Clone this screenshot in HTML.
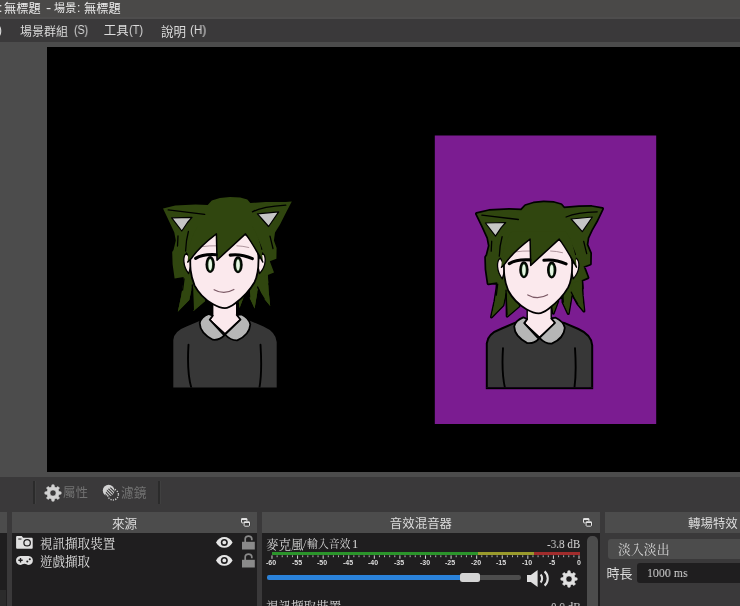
<!DOCTYPE html><html lang="zh-Hant"><head><meta charset="utf-8"><title>OBS</title><style>
html,body{margin:0;padding:0;background:#3a393a;}
body{width:740px;height:606px;overflow:hidden;position:relative;font-family:"Liberation Sans",sans-serif;color:#dcdcdc;font-size:12px;}
.abs,.g,.t{position:absolute;}
.g{overflow:visible;display:block;filter:blur(0.3px);}
.t{white-space:nowrap;line-height:1;will-change:transform;filter:blur(0.3px);}
.serif{font-family:"Liberation Serif",serif;}
.cx{transform:scaleX(0.84);transform-origin:0 0;}
.gs{font-family:"Liberation Sans","Noto Sans CJK TC",sans-serif;font-size:1000px;}
.gm{font-family:"Liberation Serif","Noto Serif CJK SC",serif;font-size:1000px;}
#titlebar{left:0;top:0;width:740px;height:19px;background:#4a4948;box-shadow:inset 0 -2px 0 #4e4d4d;}
#menubar{left:0;top:19px;width:740px;height:22.7px;background:#3a393a;}
#previewwrap{left:0;top:41.7px;width:740px;height:435.3px;background:#4c4c4c;}
#preview{left:47px;top:47px;width:693px;height:425px;background:#000;overflow:hidden;}
#toolbar{left:0;top:477px;width:740px;height:35px;background:#3a393a;}
.docktitle{top:512px;height:21px;background:#4c4c4c;}
.dockbody{top:533px;height:73px;background:#1f1e1f;}
</style></head><body>
<div id="titlebar" class="abs"></div>
<div id="menubar" class="abs"></div>
<div id="previewwrap" class="abs"></div>
<div id="preview" class="abs">
<svg class="g" viewBox="47 47 693 425" style="left:0;top:0;width:693px;height:425px;filter:blur(0.65px)" role="img" aria-label="avatar preview">
<defs>
<g id="head" stroke-linejoin="round" stroke-linecap="round">
<polygon points="184.5,275.0 181.2,296.0 177.8,311.8 189.3,300.0 191.8,288.0 192.0,280.0" fill="#30460f" stroke="#000" stroke-width="3" paint-order="stroke"/><polygon points="193.2,284.0 193.5,311.0 205.2,301.0 202.0,286.0" fill="#30460f" stroke="#000" stroke-width="3" paint-order="stroke"/><polygon points="267.8,275.0 268.6,290.5 270.2,305.9 264.0,298.4 257.4,286.0 258.0,278.0" fill="#30460f" stroke="#000" stroke-width="3" paint-order="stroke"/><polygon points="258.4,286.0 254.6,308.4 249.3,297.0 249.0,286.0" fill="#30460f" stroke="#000" stroke-width="3" paint-order="stroke"/><polygon points="244.0,296.0 239.6,308.0 238.2,297.0" fill="#30460f" stroke="#000" stroke-width="3" paint-order="stroke"/>
<polygon points="163.0,208.5 175.3,205.6 195.5,204.6 207.7,205.0 211.8,200.6 219.9,198.1 230.0,197.0 240.2,197.6 247.3,199.6 250.3,203.1 265.5,202.1 285.8,202.1 291.8,201.4 286.2,212.3 280.0,224.4 275.0,232.5 273.9,240.6 276.6,248.0 276.4,258.8 269.8,261.2 274.0,272.4 267.8,275.1 268.4,283.0 255.0,292.0 200.0,292.0 184.0,284.0 183.5,277.0 174.6,278.4 172.6,264.3 172.2,252.0 173.5,250.0 175.8,240.6 174.3,232.5 169.2,221.4" fill="#30460f" stroke="#000" stroke-width="3.400" paint-order="stroke"/>
<polygon points="184.5,275.0 181.2,296.0 177.8,311.8 189.3,300.0 191.8,288.0 192.0,280.0" fill="#30460f"/><polygon points="193.2,284.0 193.5,311.0 205.2,301.0 202.0,286.0" fill="#30460f"/><polygon points="267.8,275.0 268.6,290.5 270.2,305.9 264.0,298.4 257.4,286.0 258.0,278.0" fill="#30460f"/><polygon points="258.4,286.0 254.6,308.4 249.3,297.0 249.0,286.0" fill="#30460f"/><polygon points="244.0,296.0 239.6,308.0 238.2,297.0" fill="#30460f"/>
<polygon points="171.7,217.8 192,217.3 187.5,222.5 181.8,231" fill="#c6c6c6" stroke="#000" stroke-width="1.2"/>
<polygon points="257.4,213.8 278.7,211.8 268.6,226.5 262,219" fill="#c6c6c6" stroke="#000" stroke-width="1.2"/>
<path d="M168.2 209.9L204.7 214.3M252.4 211.8Q263 206.500 285.800 205.200M188.400 231.500Q186 240 185.600 251M254.300 234.400Q258.500 240 261.700 249.300M270 236.100L273 248.500M178 236L177.500 246M192.300 285L193.300 309.500M257.600 287Q260 293 264 298.600M249.200 290L249.600 297M184 279L182.600 290" stroke="#000" stroke-width="1.300" fill="none"/>
<path d="M186.500 253C182.500 256 182.800 266 188.600 273.600L192 262Z" fill="#fbe9ed" stroke="#000" stroke-width="1.300"/>
<path d="M262.500 253C266.500 256 266.500 266 259.500 273.600L257 262Z" fill="#fbe9ed" stroke="#000" stroke-width="1.300"/>
<path d="M190.400 256C190 266 190 274 194.500 285.300C198 292 205 299.500 212.700 304C218 307 222 308.100 224.900 308.100C228 308.100 231 306.500 235 303.500C241 299 250 290 254.500 282.200C258 275 258.800 266 258.400 256C257 238 242 229 224.400 229C207 229 192 238 190.400 256Z" fill="#fbe9ed" stroke="#000" stroke-width="1.800"/>
<path d="M202.300 246.600Q209 245.600 216.400 245.800M236.900 245.800Q243 246 248.800 247.500" stroke="#9a7f88" stroke-width="0.800" fill="none"/>
<path d="M187.500 263C188.500 250 190 238 198 226H252C259 236 262 248 263 263L260.700 258.200C256 250 251 241 245.500 233.900L217 260.200L216.400 233.900C207 241 198 249 191.500 258.200Z" fill="#30460f"/>
<path d="M187.800 262L191.500 258.200C198 249 207 241 216.400 233.900L217 260.200L245.500 233.900C251 241 256 250 260.700 258.200L262.800 262" fill="none" stroke="#000" stroke-width="1.500"/>
<path d="M195.600 258.400Q203 253.800 216.200 254.700M230.200 255.100Q241 253.600 252.400 258.700" stroke="#000" stroke-width="3.100" fill="none"/>
<ellipse cx="210.200" cy="264.600" rx="4.700" ry="8.500" fill="#020502"/>
<ellipse cx="238" cy="264.800" rx="4.700" ry="8.500" fill="#020502"/>
<ellipse cx="210.200" cy="264.800" rx="2.700" ry="6.600" fill="#163214"/>
<ellipse cx="238" cy="265" rx="2.700" ry="6.600" fill="#163214"/>
<ellipse cx="210.200" cy="264.800" rx="1.850" ry="5.700" fill="#e6f7e4"/>
<ellipse cx="238" cy="265" rx="1.850" ry="5.700" fill="#e6f7e4"/>
<path d="M214.100 289.700Q224 295.200 233.900 289.500" stroke="#7c5a66" stroke-width="1.200" fill="none"/>
</g>
<g id="head2" stroke-linejoin="round" stroke-linecap="round">
<polygon points="184.5,275.0 181.2,296.0 177.8,311.8 189.3,300.0 191.8,288.0 192.0,280.0" fill="#30460f" stroke="#000" stroke-width="3" paint-order="stroke"/><polygon points="193.2,284.0 193.5,311.0 205.2,301.0 202.0,286.0" fill="#30460f" stroke="#000" stroke-width="3" paint-order="stroke"/><polygon points="267.8,275.0 268.6,290.5 270.2,305.9 264.0,298.4 257.4,286.0 258.0,278.0" fill="#30460f" stroke="#000" stroke-width="3" paint-order="stroke"/><polygon points="258.4,286.0 254.6,308.4 249.3,297.0 249.0,286.0" fill="#30460f" stroke="#000" stroke-width="3" paint-order="stroke"/><polygon points="244.0,296.0 239.6,308.0 238.2,297.0" fill="#30460f" stroke="#000" stroke-width="3" paint-order="stroke"/>
<polygon points="163.0,208.5 175.3,205.6 195.5,204.6 207.7,205.0 211.8,200.6 219.9,198.1 230.0,197.0 240.2,197.6 247.3,199.6 250.3,203.1 265.5,201.8 278.0,201.6 288.6,203.5 283.1,215.1 277.5,225.0 274.0,232.5 273.0,239.5 276.6,248.0 276.4,258.8 269.8,261.2 274.0,272.4 267.8,275.1 268.4,283.0 255.0,292.0 200.0,292.0 184.0,284.0 183.5,277.0 174.6,278.4 172.6,264.3 172.2,252.0 173.5,250.0 175.8,240.6 174.3,232.5 169.2,221.4" fill="#30460f" stroke="#000" stroke-width="3.400" paint-order="stroke"/>
<polygon points="184.5,275.0 181.2,296.0 177.8,311.8 189.3,300.0 191.8,288.0 192.0,280.0" fill="#30460f"/><polygon points="193.2,284.0 193.5,311.0 205.2,301.0 202.0,286.0" fill="#30460f"/><polygon points="267.8,275.0 268.6,290.5 270.2,305.9 264.0,298.4 257.4,286.0 258.0,278.0" fill="#30460f"/><polygon points="258.4,286.0 254.6,308.4 249.3,297.0 249.0,286.0" fill="#30460f"/><polygon points="244.0,296.0 239.6,308.0 238.2,297.0" fill="#30460f"/>
<polygon points="171.7,217.8 192,217.3 187.5,222.5 181.8,231" fill="#c6c6c6" stroke="#000" stroke-width="1.2"/>
<polygon points="257.4,213.8 278.7,211.8 268.6,226.5 262,219" fill="#c6c6c6" stroke="#000" stroke-width="1.2"/>
<path d="M168.2 209.9L204.7 214.3M252.4 211.8Q263 207 283.500 206.600M188.400 231.500Q186 240 185.600 251M254.300 234.400Q258.500 240 261.700 249.300M270 236.100L273 248.500M178 236L177.500 246M192.300 285L193.300 309.500M257.600 287Q260 293 264 298.600M249.200 290L249.600 297M184 279L182.600 290" stroke="#000" stroke-width="1.300" fill="none"/>
<path d="M186.500 253C182.500 256 182.800 266 188.600 273.600L192 262Z" fill="#fbe9ed" stroke="#000" stroke-width="1.300"/>
<path d="M262.500 253C266.500 256 266.500 266 259.500 273.600L257 262Z" fill="#fbe9ed" stroke="#000" stroke-width="1.300"/>
<path d="M190.400 256C190 266 190 274 194.500 285.300C198 292 205 299.500 212.700 304C218 307 222 308.100 224.900 308.100C228 308.100 231 306.500 235 303.500C241 299 250 290 254.500 282.200C258 275 258.800 266 258.400 256C257 238 242 229 224.400 229C207 229 192 238 190.400 256Z" fill="#fbe9ed" stroke="#000" stroke-width="1.800"/>
<path d="M202.300 246.600Q209 245.600 216.400 245.800M236.900 245.800Q243 246 248.800 247.500" stroke="#9a7f88" stroke-width="0.800" fill="none"/>
<path d="M187.500 263C188.500 250 190 238 198 226H252C259 236 262 248 263 263L260.700 258.200C256 250 251 241 245.500 233.900L217 260.200L216.400 233.900C207 241 198 249 191.500 258.200Z" fill="#30460f"/>
<path d="M187.800 262L191.500 258.200C198 249 207 241 216.400 233.900L217 260.200L245.500 233.900C251 241 256 250 260.700 258.200L262.800 262" fill="none" stroke="#000" stroke-width="1.500"/>
<path d="M195.600 258.400Q203 253.800 216.200 254.700M230.200 255.100Q241 253.600 252.400 258.700" stroke="#000" stroke-width="3.100" fill="none"/>
<ellipse cx="210.200" cy="264.600" rx="4.700" ry="8.500" fill="#020502"/>
<ellipse cx="238" cy="264.800" rx="4.700" ry="8.500" fill="#020502"/>
<ellipse cx="210.200" cy="264.800" rx="2.700" ry="6.600" fill="#163214"/>
<ellipse cx="238" cy="265" rx="2.700" ry="6.600" fill="#163214"/>
<ellipse cx="210.200" cy="264.800" rx="1.850" ry="5.700" fill="#e6f7e4"/>
<ellipse cx="238" cy="265" rx="1.850" ry="5.700" fill="#e6f7e4"/>
<path d="M214.100 289.700Q224 295.200 233.900 289.500" stroke="#7c5a66" stroke-width="1.200" fill="none"/>
</g>
<g id="body" stroke-linejoin="round" stroke-linecap="round">
<path d="M200.700 320.400L186.500 326.500Q174 331 173.300 340V396H276.700V342Q276 332 263.500 326.500L249.300 320.400Z" fill="#373737" stroke="#000" stroke-width="4" paint-order="stroke"/>
<path d="M188.500 344.700C187.500 360 188 378 192 390M260.500 344.700C261.500 360 261.500 378 259 390" stroke="#000" stroke-width="1.900" fill="none"/>
<path d="M212.700 303V315.700L209.700 319.700L225 333.800L240.500 319.500L236.700 313.600V303Z" fill="#fbe9ed" stroke="#000" stroke-width="1.400"/>
<path d="M208.800 313.900Q201 317 199.700 323Q200 333 212.800 339.700Q219.500 340.500 224.300 335.400L209.700 319.700L212.700 315.700Z" fill="#b6b6b6" stroke="#000" stroke-width="1.800"/>
<path d="M241.200 314.300Q249 318 250.300 324.500Q249.500 335 237.200 340.300Q230.500 340.500 225 334.500L240.500 319.500L236.700 315Z" fill="#b6b6b6" stroke="#000" stroke-width="1.800"/>
</g>
<clipPath id="cl"><rect x="150" y="180" width="160" height="207.600"/></clipPath>
<clipPath id="cr"><rect x="150" y="180" width="160" height="203.900"/></clipPath>
</defs>
<rect x="434.800" y="135.500" width="221.400" height="288.500" fill="#7b1c91"/>
<g clip-path="url(#cl)"><use href="#body"/></g><use href="#head"/>
<g transform="translate(314.500 3.400)"><g clip-path="url(#cr)"><use href="#body"/></g><rect x="171.300" y="383.800" width="107.400" height="2" fill="#000"/></g>
<use href="#head2" transform="translate(313.700 5.200)"/>
</svg>
</div>
<div id="toolbar" class="abs"></div>
<span class="t" style="left:-1px;top:2px;font-size:12px;color:#ececec">:</span>
<svg class="g" role="img" aria-label="無標題" viewBox="-7 -893 3019 1021" style="left:4.41px;top:1.61px;width:36.88px;height:12.47px;"><text class="gs" x="0" y="0" fill="#ececec">無標題</text></svg>
<span class="t" style="left:45.9px;top:1.5px;font-size:12px;color:#ececec;transform:scaleX(1.3);transform-origin:0 0">-</span>
<svg class="g" role="img" aria-label="場景" viewBox="-11 -874 1992 1002" style="left:54.36px;top:1.66px;width:21.98px;height:11.06px;"><text class="gs" x="0" y="0" fill="#ececec">場景</text></svg>
<span class="t" style="left:77.3px;top:2px;font-size:12px;color:#ececec">:</span>
<svg class="g" role="img" aria-label="無標題" viewBox="-7 -893 3019 1021" style="left:84.41px;top:1.61px;width:36.88px;height:12.47px;"><text class="gs" x="0" y="0" fill="#ececec">無標題</text></svg>
<span class="t" style="left:-2.3px;top:24.4px;font-size:12px;color:#dcdcdc">)</span>
<svg class="g" role="img" aria-label="場景群組" viewBox="-6 -883 4005 1007" style="left:20.22px;top:24.52px;width:47.96px;height:12.06px;"><text class="gs" x="0" y="0" fill="#dcdcdc">場景群組</text></svg>
<span class="t" style="left:73.6px;top:24.4px;font-size:12px;color:#dcdcdc;transform:scaleX(0.88);transform-origin:0 0">(S)</span>
<svg class="g" role="img" aria-label="工具" viewBox="12 -832 1990 953" style="left:104.20px;top:24.70px;width:24.69px;height:11.83px;"><text class="gs" x="0" y="0" fill="#dcdcdc">工具</text></svg>
<span class="t" style="left:129.2px;top:24.4px;font-size:12px;color:#dcdcdc;transform:scaleX(0.915);transform-origin:0 0">(T)</span>
<svg class="g" role="img" aria-label="說明" viewBox="1 -876 1967 1003" style="left:161.30px;top:24.70px;width:24.70px;height:12.60px;"><text class="gs" x="0" y="0" fill="#dcdcdc">說明</text></svg>
<span class="t" style="left:189.8px;top:24.4px;font-size:12px;color:#dcdcdc;transform:scaleX(0.965);transform-origin:0 0">(H)</span>
<div class="abs" style="left:32.5px;top:481px;width:2px;height:23px;background:#2b2b2b;border-right:1px solid #404040"></div>
<div class="abs" style="left:158px;top:481px;width:2px;height:23px;background:#2b2b2b;border-right:1px solid #404040"></div>
<svg class="g" viewBox="-10 -10 20 20" style="left:42.9px;top:482.6px;width:20px;height:20px"><path fill="#d2d2d2" stroke="#d2d2d2" stroke-width="0.6" stroke-linejoin="round" fill-rule="evenodd" d="M-1.47 -5.92L-1.09 -8.13L1.09 -8.13L1.47 -5.92L3.15 -5.23L4.97 -6.52L6.52 -4.97L5.23 -3.15L5.92 -1.47L8.13 -1.09L8.13 1.09L5.92 1.47L5.23 3.15L6.52 4.97L4.97 6.52L3.15 5.23L1.47 5.92L1.09 8.13L-1.09 8.13L-1.47 5.92L-3.15 5.23L-4.97 6.52L-6.52 4.97L-5.23 3.15L-5.92 1.47L-8.13 1.09L-8.13 -1.09L-5.92 -1.47L-5.23 -3.15L-6.52 -4.97L-4.97 -6.52L-3.15 -5.23ZM3.10 0A3.10 3.10 0 1 0 -3.10 0A3.10 3.10 0 1 0 3.10 0Z"/></svg>
<svg class="g" role="img" aria-label="屬性" viewBox="-1 -880 1990 999" style="left:63.30px;top:486.30px;width:24.80px;height:12.45px;"><text class="gs" x="0" y="0" fill="#727272">屬性</text></svg>
<svg class="g" viewBox="100 482 22 22" style="left:100px;top:482px;width:22px;height:22px;filter:blur(0.45px)"><defs><clipPath id="fc"><circle cx="113.300" cy="495" r="8"/></clipPath><clipPath id="fc2"><circle cx="108.600" cy="490.500" r="5.800"/></clipPath></defs><circle cx="113" cy="494.600" r="5.400" fill="none" stroke="#d2d2d2" stroke-width="1.400" stroke-dasharray="1.150 1.274"/><circle cx="108.600" cy="490.500" r="5.800" fill="#d2d2d2"/><g clip-path="url(#fc2)"><g clip-path="url(#fc)"><path d="M102 485.300L118 501.300M102 488.300L118 504.300M102 482.300L118 498.300M102 479.300L118 495.300M102 491.300L118 507.300" stroke="#3a393a" stroke-width="1.150" fill="none"/></g></g></svg>
<svg class="g" role="img" aria-label="濾鏡" viewBox="-2 -886 2010 1009" style="left:121.19px;top:486.29px;width:25.62px;height:12.86px;"><text class="gs" x="0" y="0" fill="#727272">濾鏡</text></svg>
<div class="abs docktitle" style="left:0;width:7px"></div><div class="abs dockbody" style="left:0;width:7px"></div>
<div class="abs" style="left:0;top:589.5px;width:5.5px;height:17px;background:#2b2b2b"></div>
<div class="abs docktitle" style="left:12px;width:245px"></div><div class="abs dockbody" style="left:12px;width:245px"></div>
<svg class="g" role="img" aria-label="來源" viewBox="-3 -879 2010 999" style="left:112.00px;top:516.90px;width:25.31px;height:12.58px;"><text class="gs" x="0" y="0" fill="#dcdcdc">來源</text></svg>
<svg class="g" viewBox="0 0 9 9" style="left:240.5px;top:518.3px;width:9px;height:9px"><rect x="0.500" y="0.700" width="5.400" height="4.200" rx="0.700" fill="#4c4c4c" stroke="#e4e4e4" stroke-width="1"/><rect x="0.200" y="0.300" width="6" height="1.600" rx="0.500" fill="#e4e4e4"/><rect x="2.400" y="3" width="7" height="6" rx="1" fill="#3c3c3c"/><rect x="3.100" y="3.900" width="5.400" height="4.300" rx="0.700" fill="#3c3c3c" stroke="#e4e4e4" stroke-width="1"/><rect x="2.800" y="3.500" width="6" height="1.600" rx="0.500" fill="#e4e4e4"/></svg>
<svg class="g" viewBox="0 0 17 13" style="left:15.9px;top:536.1px;width:16.800px;height:12.700px"><path fill="#e0e0e0" d="M0 1C0 .400.400 0 1 0H5.800L7.200 1.700H16C16.600 1.700 17 2.100 17 2.700V12C17 12.600 16.600 13 16 13H1C.400 13 0 12.600 0 12Z"/><circle cx="11.300" cy="6.900" r="3.300" fill="none" stroke="#1f1e1f" stroke-width="1.300"/><rect x="2.200" y="2.600" width="3.300" height="1" fill="#1f1e1f"/></svg>
<svg class="g" role="img" aria-label="視訊擷取裝置" viewBox="0 -878 6002 1000" style="left:40.30px;top:537.00px;width:75.30px;height:12.55px;"><text class="gm" x="0" y="0" fill="#e0e0e0">視訊擷取裝置</text></svg>
<svg class="g" viewBox="0 0 17 9" style="left:15.8px;top:555.9px;width:16.900px;height:8.900px"><path fill="#e0e0e0" d="M4.400 0H12.600C18.500 0 18.500 9 12.600 9C11 9 10.200 7.900 8.500 7.900C6.800 7.900 6 9 4.400 9C-1.500 9-1.500 0 4.400 0Z"/><path d="M2.300 4.300H6.700M4.500 2.100V6.500" stroke="#1f1e1f" stroke-width="1.400"/><circle cx="11.400" cy="5.500" r="1.050" fill="#1f1e1f"/><circle cx="13.900" cy="3.300" r="1.050" fill="#1f1e1f"/></svg>
<svg class="g" role="img" aria-label="遊戲擷取" viewBox="-1 -880 4016 1002" style="left:40.30px;top:555.10px;width:50.30px;height:12.55px;"><text class="gm" x="0" y="0" fill="#e0e0e0">遊戲擷取</text></svg>
<svg class="g" viewBox="0 0 17 11" style="left:215.9px;top:537.0px;width:16.600px;height:10.900px"><path fill="#e6e6e6" d="M0 5.5C2 2 5 0 8.500 0S15 2 17 5.500C15 9 12 11 8.500 11S2 9 0 5.500Z"/><circle cx="8.500" cy="5.500" r="3.600" fill="#1f1e1f"/><circle cx="8.500" cy="5.500" r="1.900" fill="#e6e6e6"/></svg>
<svg class="g" viewBox="0 0 17 11" style="left:215.9px;top:554.7px;width:16.600px;height:10.900px"><path fill="#e6e6e6" d="M0 5.5C2 2 5 0 8.500 0S15 2 17 5.500C15 9 12 11 8.500 11S2 9 0 5.500Z"/><circle cx="8.500" cy="5.500" r="3.600" fill="#1f1e1f"/><circle cx="8.500" cy="5.500" r="1.900" fill="#e6e6e6"/></svg>
<svg class="g" viewBox="0 0 13 14.500" style="left:241.7px;top:535.3px;width:13px;height:14.500px"><rect x="0" y="6.800" width="12.800" height="7.700" fill="#8a8a8a"/><path d="M3.200 7V3.800C3.200 0.200 9.800 0.200 9.800 3.800V5.200" fill="none" stroke="#8a8a8a" stroke-width="1.700"/></svg>
<svg class="g" viewBox="0 0 13 14.500" style="left:241.7px;top:552.8px;width:13px;height:14.500px"><rect x="0" y="6.800" width="12.800" height="7.700" fill="#8a8a8a"/><path d="M3.200 7V3.800C3.200 0.200 9.800 0.200 9.800 3.800V5.200" fill="none" stroke="#8a8a8a" stroke-width="1.700"/></svg>
<div class="abs docktitle" style="left:262px;width:338px"></div><div class="abs dockbody" style="left:262px;width:338px"></div>
<svg class="g" role="img" aria-label="音效混音器" viewBox="15 -888 4983 1011" style="left:390.20px;top:516.70px;width:62.00px;height:12.58px;"><text class="gs" x="0" y="0" fill="#dcdcdc">音效混音器</text></svg>
<svg class="g" viewBox="0 0 9 9" style="left:582.6px;top:518.3px;width:9px;height:9px"><rect x="0.500" y="0.700" width="5.400" height="4.200" rx="0.700" fill="#4c4c4c" stroke="#e4e4e4" stroke-width="1"/><rect x="0.200" y="0.300" width="6" height="1.600" rx="0.500" fill="#e4e4e4"/><rect x="2.400" y="3" width="7" height="6" rx="1" fill="#3c3c3c"/><rect x="3.100" y="3.900" width="5.400" height="4.300" rx="0.700" fill="#3c3c3c" stroke="#e4e4e4" stroke-width="1"/><rect x="2.800" y="3.500" width="6" height="1.600" rx="0.500" fill="#e4e4e4"/></svg>
<svg class="g" role="img" aria-label="麥克風" viewBox="9 -879 2992 1000" style="left:266.30px;top:537.90px;width:37.61px;height:12.57px;"><text class="gm" x="0" y="0" fill="#d8d8d8">麥克風</text></svg>
<span class="t serif" style="left:303.3px;top:537.5px;font-size:12.5px;color:#d8d8d8">/</span>
<svg class="g" role="img" aria-label="輸入音效" viewBox="-3 -885 4019 1006" style="left:307.17px;top:537.97px;width:43.67px;height:10.93px;"><text class="gm" x="0" y="0" fill="#d8d8d8">輸入音效</text></svg>
<span class="t serif" style="left:351.5px;top:537.5px;font-size:12.5px;color:#d8d8d8">1</span>
<span class="t serif cx" style="left:547.3px;top:537.1px;font-size:13.2px;color:#d8d8d8">-3.8 dB</span>
<div class="abs" style="left:272px;top:551.7px;width:205.5px;height:3.7px;background:#2b942b"></div>
<div class="abs" style="left:477.5px;top:551.7px;width:56px;height:3.7px;background:#9a9a2c"></div>
<div class="abs" style="left:533.5px;top:551.7px;width:46.5px;height:3.7px;background:#a02c2c"></div>
<svg class="g" viewBox="0 0 740 606" style="left:0;top:0;width:740px;height:606px"><rect x="271.48" y="555.400" width="1" height="3.400" fill="#d2d2d2"/><rect x="276.60" y="555.400" width="1" height="1.800" fill="#b4b4b4"/><rect x="281.71" y="555.400" width="1" height="1.800" fill="#b4b4b4"/><rect x="286.83" y="555.400" width="1" height="1.800" fill="#b4b4b4"/><rect x="291.95" y="555.400" width="1" height="1.800" fill="#b4b4b4"/><rect x="297.06" y="555.400" width="1" height="3.400" fill="#d2d2d2"/><rect x="302.18" y="555.400" width="1" height="1.800" fill="#b4b4b4"/><rect x="307.30" y="555.400" width="1" height="1.800" fill="#b4b4b4"/><rect x="312.42" y="555.400" width="1" height="1.800" fill="#b4b4b4"/><rect x="317.53" y="555.400" width="1" height="1.800" fill="#b4b4b4"/><rect x="322.65" y="555.400" width="1" height="3.400" fill="#d2d2d2"/><rect x="327.77" y="555.400" width="1" height="1.800" fill="#b4b4b4"/><rect x="332.88" y="555.400" width="1" height="1.800" fill="#b4b4b4"/><rect x="338.00" y="555.400" width="1" height="1.800" fill="#b4b4b4"/><rect x="343.12" y="555.400" width="1" height="1.800" fill="#b4b4b4"/><rect x="348.24" y="555.400" width="1" height="3.400" fill="#d2d2d2"/><rect x="353.35" y="555.400" width="1" height="1.800" fill="#b4b4b4"/><rect x="358.47" y="555.400" width="1" height="1.800" fill="#b4b4b4"/><rect x="363.59" y="555.400" width="1" height="1.800" fill="#b4b4b4"/><rect x="368.70" y="555.400" width="1" height="1.800" fill="#b4b4b4"/><rect x="373.82" y="555.400" width="1" height="3.400" fill="#d2d2d2"/><rect x="378.94" y="555.400" width="1" height="1.800" fill="#b4b4b4"/><rect x="384.05" y="555.400" width="1" height="1.800" fill="#b4b4b4"/><rect x="389.17" y="555.400" width="1" height="1.800" fill="#b4b4b4"/><rect x="394.29" y="555.400" width="1" height="1.800" fill="#b4b4b4"/><rect x="399.40" y="555.400" width="1" height="3.400" fill="#d2d2d2"/><rect x="404.52" y="555.400" width="1" height="1.800" fill="#b4b4b4"/><rect x="409.64" y="555.400" width="1" height="1.800" fill="#b4b4b4"/><rect x="414.76" y="555.400" width="1" height="1.800" fill="#b4b4b4"/><rect x="419.87" y="555.400" width="1" height="1.800" fill="#b4b4b4"/><rect x="424.99" y="555.400" width="1" height="3.400" fill="#d2d2d2"/><rect x="430.11" y="555.400" width="1" height="1.800" fill="#b4b4b4"/><rect x="435.22" y="555.400" width="1" height="1.800" fill="#b4b4b4"/><rect x="440.34" y="555.400" width="1" height="1.800" fill="#b4b4b4"/><rect x="445.46" y="555.400" width="1" height="1.800" fill="#b4b4b4"/><rect x="450.57" y="555.400" width="1" height="3.400" fill="#d2d2d2"/><rect x="455.69" y="555.400" width="1" height="1.800" fill="#b4b4b4"/><rect x="460.81" y="555.400" width="1" height="1.800" fill="#b4b4b4"/><rect x="465.93" y="555.400" width="1" height="1.800" fill="#b4b4b4"/><rect x="471.04" y="555.400" width="1" height="1.800" fill="#b4b4b4"/><rect x="476.16" y="555.400" width="1" height="3.400" fill="#d2d2d2"/><rect x="481.28" y="555.400" width="1" height="1.800" fill="#b4b4b4"/><rect x="486.39" y="555.400" width="1" height="1.800" fill="#b4b4b4"/><rect x="491.51" y="555.400" width="1" height="1.800" fill="#b4b4b4"/><rect x="496.63" y="555.400" width="1" height="1.800" fill="#b4b4b4"/><rect x="501.75" y="555.400" width="1" height="3.400" fill="#d2d2d2"/><rect x="506.86" y="555.400" width="1" height="1.800" fill="#b4b4b4"/><rect x="511.98" y="555.400" width="1" height="1.800" fill="#b4b4b4"/><rect x="517.10" y="555.400" width="1" height="1.800" fill="#b4b4b4"/><rect x="522.21" y="555.400" width="1" height="1.800" fill="#b4b4b4"/><rect x="527.33" y="555.400" width="1" height="3.400" fill="#d2d2d2"/><rect x="532.45" y="555.400" width="1" height="1.800" fill="#b4b4b4"/><rect x="537.56" y="555.400" width="1" height="1.800" fill="#b4b4b4"/><rect x="542.68" y="555.400" width="1" height="1.800" fill="#b4b4b4"/><rect x="547.80" y="555.400" width="1" height="1.800" fill="#b4b4b4"/><rect x="552.91" y="555.400" width="1" height="3.400" fill="#d2d2d2"/><rect x="558.03" y="555.400" width="1" height="1.800" fill="#b4b4b4"/><rect x="563.15" y="555.400" width="1" height="1.800" fill="#b4b4b4"/><rect x="568.27" y="555.400" width="1" height="1.800" fill="#b4b4b4"/><rect x="573.38" y="555.400" width="1" height="1.800" fill="#b4b4b4"/><rect x="578.50" y="555.400" width="1" height="3.400" fill="#d2d2d2"/></svg>
<span class="t" style="left:261.0px;top:559.3px;width:20px;text-align:center;font-size:7px;font-weight:bold;color:#dedede">-60</span>
<span class="t" style="left:286.6px;top:559.3px;width:20px;text-align:center;font-size:7px;font-weight:bold;color:#dedede">-55</span>
<span class="t" style="left:312.1px;top:559.3px;width:20px;text-align:center;font-size:7px;font-weight:bold;color:#dedede">-50</span>
<span class="t" style="left:337.7px;top:559.3px;width:20px;text-align:center;font-size:7px;font-weight:bold;color:#dedede">-45</span>
<span class="t" style="left:363.3px;top:559.3px;width:20px;text-align:center;font-size:7px;font-weight:bold;color:#dedede">-40</span>
<span class="t" style="left:388.9px;top:559.3px;width:20px;text-align:center;font-size:7px;font-weight:bold;color:#dedede">-35</span>
<span class="t" style="left:414.5px;top:559.3px;width:20px;text-align:center;font-size:7px;font-weight:bold;color:#dedede">-30</span>
<span class="t" style="left:440.1px;top:559.3px;width:20px;text-align:center;font-size:7px;font-weight:bold;color:#dedede">-25</span>
<span class="t" style="left:465.7px;top:559.3px;width:20px;text-align:center;font-size:7px;font-weight:bold;color:#dedede">-20</span>
<span class="t" style="left:491.2px;top:559.3px;width:20px;text-align:center;font-size:7px;font-weight:bold;color:#dedede">-15</span>
<span class="t" style="left:516.8px;top:559.3px;width:20px;text-align:center;font-size:7px;font-weight:bold;color:#dedede">-10</span>
<span class="t" style="left:542.4px;top:559.3px;width:20px;text-align:center;font-size:7px;font-weight:bold;color:#dedede">-5</span>
<span class="t" style="left:569.0px;top:559.3px;width:20px;text-align:center;font-size:7px;font-weight:bold;color:#dedede">0</span>
<div class="abs" style="left:267px;top:575.4px;width:254px;height:4.6px;border-radius:2.3px;background:#4c4c4c"></div>
<div class="abs" style="left:267px;top:575.4px;width:200px;height:4.6px;border-radius:2.3px;background:#2a82da"></div>
<div class="abs" style="left:460.4px;top:572.8px;width:20px;height:9.2px;border-radius:2.5px;background:#d4d4d4"></div>
<svg class="g" viewBox="0 0 24 17" style="left:527.2px;top:570px;width:24px;height:17px"><path fill="#e0e0e0" d="M0 5H3.800L10.600 0V17L3.800 12H0Z"/><path d="M13.600 4.600C15.600 6.600 15.600 10.400 13.600 12.400M17.600 1.400C21.800 5.200 21.800 11.800 17.600 15.600" fill="none" stroke="#e0e0e0" stroke-width="2.100"/></svg>
<svg class="g" viewBox="-10 -10 20 20" style="left:559.1px;top:568.9px;width:20px;height:20px"><path fill="#e0e0e0" stroke="#e0e0e0" stroke-width="0.6" stroke-linejoin="round" fill-rule="evenodd" d="M-1.47 -5.92L-1.09 -8.13L1.09 -8.13L1.47 -5.92L3.15 -5.23L4.97 -6.52L6.52 -4.97L5.23 -3.15L5.92 -1.47L8.13 -1.09L8.13 1.09L5.92 1.47L5.23 3.15L6.52 4.97L4.97 6.52L3.15 5.23L1.47 5.92L1.09 8.13L-1.09 8.13L-1.47 5.92L-3.15 5.23L-4.97 6.52L-6.52 4.97L-5.23 3.15L-5.92 1.47L-8.13 1.09L-8.13 -1.09L-5.92 -1.47L-5.23 -3.15L-6.52 -4.97L-4.97 -6.52L-3.15 -5.23ZM3.10 0A3.10 3.10 0 1 0 -3.10 0A3.10 3.10 0 1 0 3.10 0Z"/></svg>
<svg class="g" role="img" aria-label="視訊擷取裝置" viewBox="0 -878 6002 1000" style="left:266.30px;top:600.10px;width:75.30px;height:12.55px;"><text class="gm" x="0" y="0" fill="#d8d8d8">視訊擷取裝置</text></svg>
<span class="t serif cx" style="left:551px;top:599.6px;font-size:13.2px;color:#d8d8d8">0.0 dB</span>
<div class="abs" style="left:587px;top:536px;width:10.5px;height:80px;border-radius:5px;background:#4c4c4c"></div>
<div class="abs docktitle" style="left:604.5px;width:136px"></div>
<svg class="g" role="img" aria-label="轉場特效" viewBox="-2 -881 4009 1005" style="left:687.80px;top:516.70px;width:49.90px;height:12.51px;"><text class="gs" x="0" y="0" fill="#dcdcdc">轉場特效</text></svg>
<div class="abs" style="left:608px;top:539px;width:140px;height:19.6px;border-radius:3px;background:#4c4c4c"></div>
<svg class="g" role="img" aria-label="淡入淡出" viewBox="1 -873 3958 992" style="left:617.68px;top:543.08px;width:51.13px;height:12.82px;"><text class="gm" x="0" y="0" fill="#d8d8d8">淡入淡出</text></svg>
<svg class="g" role="img" aria-label="時長" viewBox="36 -881 1975 1002" style="left:607.38px;top:567.08px;width:25.64px;height:13.01px;"><text class="gs" x="0" y="0" fill="#dcdcdc">時長</text></svg>
<div class="abs" style="left:637.3px;top:562.5px;width:110px;height:20.5px;border-radius:3px;background:#1f1e1f"></div>
<span class="t serif cx" style="left:647px;top:566.4px;font-size:13.2px;color:#d8d8d8;transform:scaleX(0.9)">1000 ms</span>
</body></html>
